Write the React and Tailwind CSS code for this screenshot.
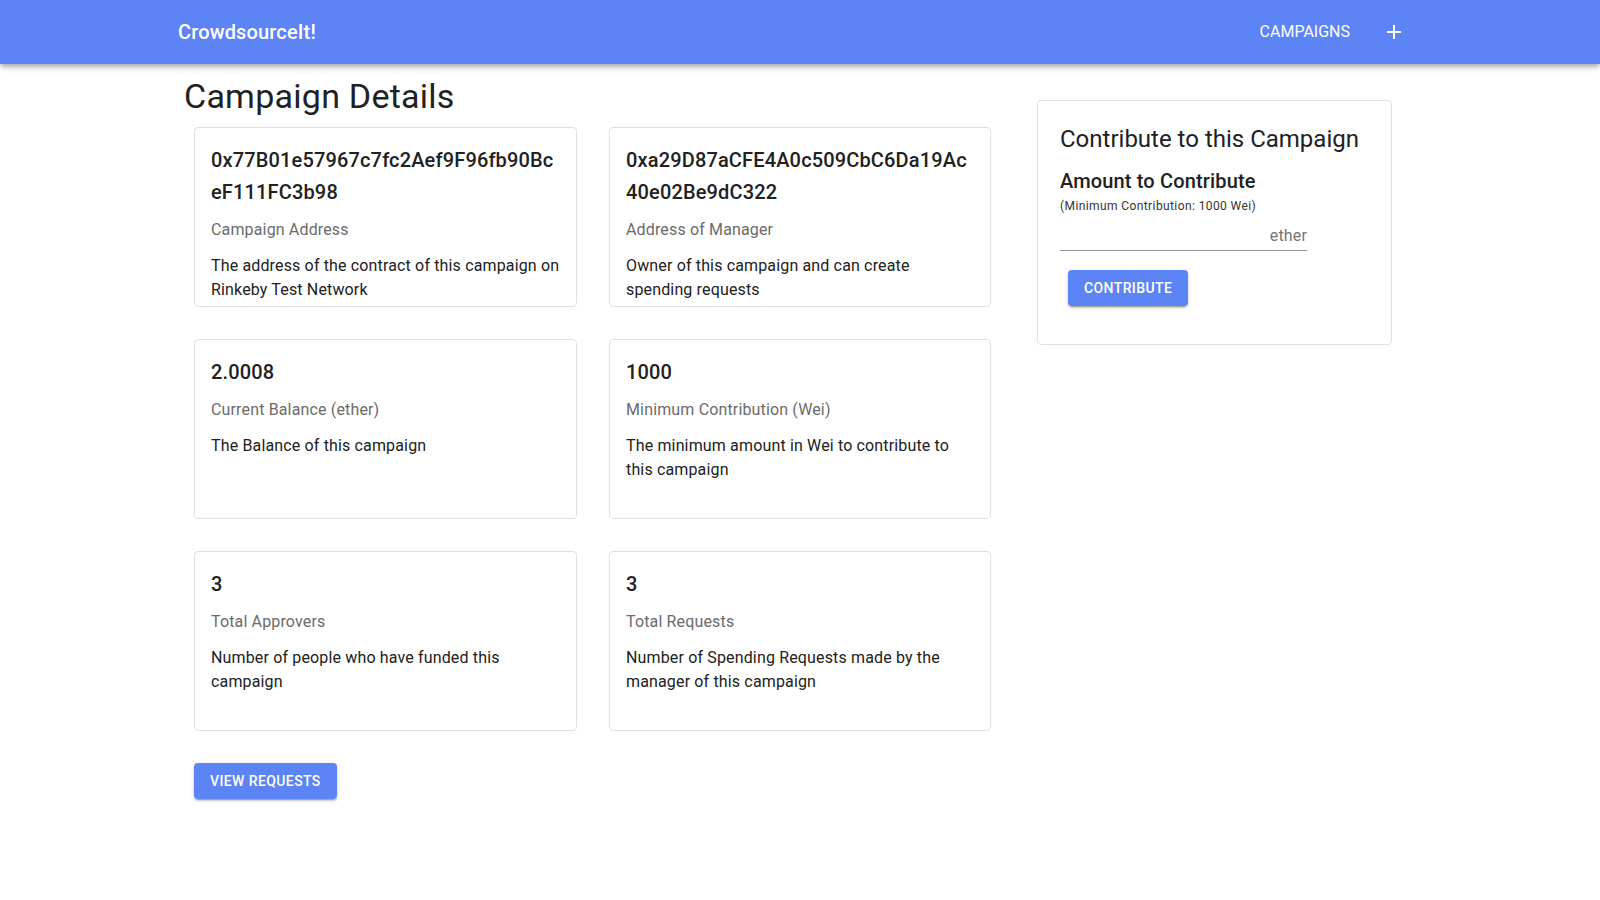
const cards = [
  {
    title: '0x77B01e57967c7fc2Aef9F96fb90BceF111FC3b98',
    label: 'Campaign Address',
    text: 'The address of the contract of this campaign on Rinkeby Test Network',
  },
  {
    title: '0xa29D87aCFE4A0c509CbC6Da19Ac40e02Be9dC322',
    label: 'Address of Manager',
    text: 'Owner of this campaign and can create spending requests',
  },
  {
    title: '2.0008',
    label: 'Current Balance (ether)',
    text: 'The Balance of this campaign',
  },
  {
    title: '1000',
    label: 'Minimum Contribution (Wei)',
    text: 'The minimum amount in Wei to contribute to this campaign',
  },
  {
    title: '3',
    label: 'Total Approvers',
    text: 'Number of people who have funded this campaign',
  },
  {
    title: '3',
    label: 'Total Requests',
    text: 'Number of Spending Requests made by the manager of this campaign',
  },
];

function InfoCard({ title, label, text }) {
  return (
    <div className="h-[180px] overflow-hidden rounded border border-[#e0e0e0] bg-white p-4">
      <div className="mb-[10px] break-all text-xl font-medium leading-8 tracking-[0.15px] text-[#212121]">{title}</div>
      <div className="mb-3 text-base leading-6 tracking-[0.15px] text-[#6b6b6b]">{label}</div>
      <div className="text-base leading-6 tracking-[0.15px] text-[#212121]">{text}</div>
    </div>
  );
}

export default function App() {
  const btnShadow =
    'shadow-[0px_3px_1px_-2px_rgba(0,0,0,0.2),0px_2px_2px_0px_rgba(0,0,0,0.14),0px_1px_5px_0px_rgba(0,0,0,0.12)]';

  return (
    <div className="min-h-screen bg-white" style={{ fontFamily: 'Roboto, "Liberation Sans", sans-serif' }}>
      <header className="relative z-10 h-16 bg-[#5c84f4] shadow-[0px_2px_4px_-1px_rgba(0,0,0,0.2),0px_4px_5px_0px_rgba(0,0,0,0.14),0px_1px_10px_0px_rgba(0,0,0,0.12)]">
        <div className="mx-auto flex h-16 w-[1280px] items-center justify-between pl-[18px] pr-[34px]">
          <div className="text-xl font-medium tracking-[0.15px] text-white">CrowdsourceIt!</div>
          <div className="flex items-center gap-8">
            <span className="text-base text-white">CAMPAIGNS</span>
            <svg width="24" height="24" viewBox="0 0 24 24" fill="white">
              <path d="M19 13h-6v6h-2v-6H5v-2h6V5h2v6h6v2z" />
            </svg>
          </div>
        </div>
      </header>

      <main className="mx-auto flex w-[1280px] items-start px-6">
        <div>
          <h1 className="mt-[11px] text-[34px] font-normal leading-[42px] tracking-[0.25px] text-[#212121]">
            Campaign Details
          </h1>
          <div className="mt-[10px] pl-[10px]">
            <div className="grid grid-cols-[383px_382px] gap-8">
              {cards.map((c, i) => (
                <InfoCard key={i} {...c} />
              ))}
            </div>
            <button
              className={`mt-8 h-9 rounded bg-[#5c84f4] px-4 text-sm font-medium uppercase tracking-[0.4px] text-white ${btnShadow}`}
            >
              View Requests
            </button>
          </div>
        </div>

        <div className="ml-[46px] mt-9 w-[355px] rounded border border-[#e0e0e0] bg-white pb-[38px] pl-[22px] pt-[22px]">
          <div className="text-2xl leading-8 text-[#212121]">Contribute to this Campaign</div>
          <div className="mt-[10px] text-xl font-medium leading-8 tracking-[0.15px] text-[#212121]">
            Amount to Contribute
          </div>
          <div className="text-xs leading-[18px] tracking-[0.4px] text-[#333333]">(Minimum Contribution: 1000 Wei)</div>
          <div className="flex h-[36px] w-[247px] items-end justify-end border-b border-[#949494] pb-[2px]">
            <span className="text-base leading-6 tracking-[0.15px] text-[#757575]">ether</span>
          </div>
          <button
            className={`ml-2 mt-[19px] h-9 rounded bg-[#5c84f4] px-4 text-sm font-medium uppercase tracking-[0.4px] text-white ${btnShadow}`}
          >
            Contribute
          </button>
        </div>
      </main>
    </div>
  );
}
